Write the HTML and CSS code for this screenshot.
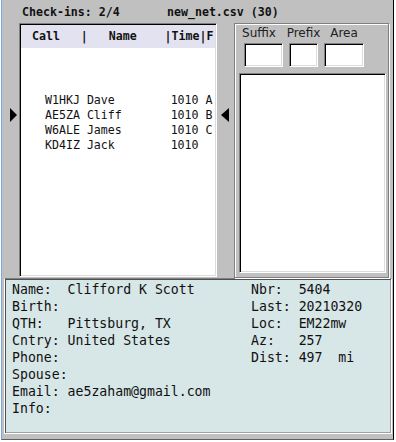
FILE: index.html
```html
<!DOCTYPE html>
<html lang="en">
<head>
    <meta charset="UTF-8">
    <title>Net check-ins</title>
    <link rel="stylesheet" href="styles.css">
</head>
<body>
    <div class="window">
        <div class="topbar">
            <span class="count">Check-ins: 2/4</span>
            <span class="file">new_net.csv (30)</span>
        </div>
        <div class="main">
            <div class="gutter"><span class="arrow-right"></span></div>
            <div class="list">
                <div class="list-head">Call   |   Name    |Time|F</div>
                <div class="list-body">
                    <div class="row">W1HKJ Dave        1010 A</div>
                    <div class="row">AE5ZA Cliff       1010 B</div>
                    <div class="row">W6ALE James       1010 C</div>
                    <div class="row">KD4IZ Jack        1010</div>
                </div>
            </div>
            <div class="gutter mid"><span class="arrow-left"></span></div>
            <div class="search">
                <div class="fields">
                    <div class="field f-suffix"><label>Suffix</label><input type="text"></div>
                    <div class="field f-prefix"><label>Prefix</label><input type="text"></div>
                    <div class="field f-area"><label>Area</label><input type="text"></div>
                </div>
                <div class="results"></div>
            </div>
        </div>
        <div class="info">
            <div class="col left">
                <div class="line">Name:  Clifford K Scott</div>
                <div class="line">Birth:</div>
                <div class="line">QTH:   Pittsburg, TX</div>
                <div class="line">Cntry: United States</div>
                <div class="line">Phone:</div>
                <div class="line">Spouse:</div>
                <div class="line">Email: ae5zaham@gmail.com</div>
                <div class="line">Info:</div>
            </div>
            <div class="col">
                <div class="line">Nbr:  5404</div>
                <div class="line">Last: 20210320</div>
                <div class="line">Loc:  EM22mw</div>
                <div class="line">Az:   257</div>
                <div class="line">Dist: 497  mi</div>
            </div>
        </div>
    </div>
</body>
</html>
```

FILE: styles.css
```css
* {
    margin: 0;
    padding: 0;
    box-sizing: border-box;
}
body {
    background: #fff;
    font-family: "DejaVu Sans Mono", monospace;
    color: #111;
}
.window {
    width: 393px;
    height: 440px;
    margin-left: 1px;
    background: #c0c0c0;
    border-left: 1px solid #78a8e8;
    border-right: 1px solid #000;
    border-bottom: 1px solid #606060;
    box-shadow: 0 1px 0 #78a8e8;
}
.topbar {
    display: flex;
    height: 23px;
    padding: 2px 0 0 20px;
    font: bold 11.6px/21px "DejaVu Sans Mono", monospace;
}
.count {
    width: 145px;
}
.main {
    display: flex;
    height: 255px;
}
.gutter {
    width: 17px;
    padding: 85px 0 0 8px;
}
.gutter.mid {
    padding-left: 4px;
}
.arrow-right {
    display: block;
    width: 0;
    height: 0;
    border-left: 7px solid #000;
    border-top: 7px solid transparent;
    border-bottom: 7px solid transparent;
}
.arrow-left {
    display: block;
    width: 0;
    height: 0;
    border-right: 8px solid #000;
    border-top: 7px solid transparent;
    border-bottom: 7px solid transparent;
}
.list {
    width: 198px;
    height: 254px;
    background: #fff;
    overflow: hidden;
    border: 1px solid;
    border-color: #808080 #fff #fff #808080;
    box-shadow: inset 1px 1px 0 #000, inset -1px -1px 0 #dcdcdc;
    padding: 1px;
    font-size: 11.6px;
}
.list-head {
    height: 23px;
    line-height: 23px;
    padding-left: 11px;
    background: #e2e2f0;
    font-weight: bold;
    white-space: pre;
}
.list-body {
    padding: 45px 0 0 24px;
}
.row {
    line-height: 15px;
    white-space: pre;
}
.search {
    width: 155px;
    border: 1px solid #808080;
    box-shadow: inset 1px 1px 0 #fff, 1px 1px 0 #fff;
    padding: 1px 2px 4px 4px;
    display: flex;
    flex-direction: column;
}
.fields {
    display: flex;
    gap: 2px;
    margin: 0 0 6px 3px;
}
.field {
    display: flex;
    flex-direction: column;
    align-items: center;
}
.field label {
    font: 12px/16px "DejaVu Sans", sans-serif;
    color: #222;
}
.f-suffix { width: 43px; }
.f-suffix label { margin-right: 9px; }
.f-prefix { width: 33px; }
.f-area { width: 44px; }
.field input {
    height: 24px;
    margin-top: 2px;
    background: #fff;
    border: 1px solid;
    border-color: #808080 #fff #fff #808080;
    box-shadow: inset 1px 1px 0 #000, inset -1px -1px 0 #dcdcdc;
    outline: none;
}
.f-suffix input { width: 39px; }
.f-prefix input { width: 29px; }
.f-area input { width: 40px; }
.results {
    flex: 1;
    background: #fff;
    border: 1px solid;
    border-color: #808080 #fff #fff #808080;
    box-shadow: inset 1px 1px 0 #000, inset -1px -1px 0 #dcdcdc;
}
.info {
    display: flex;
    height: 156px;
    margin: 0 1px 0 2px;
    padding: 2px 0 0 7px;
    background: #d7e6e6;
    border: 1px solid;
    border-color: #808080 #fff #fff #fff;
    box-shadow: inset 1px 1px 0 #505050, inset -1px -1px 0 #a0a0a0;
    font-size: 13.2px;
    line-height: 17px;
}
.col.left {
    width: 239px;
}
.line {
    white-space: pre;
}
```
